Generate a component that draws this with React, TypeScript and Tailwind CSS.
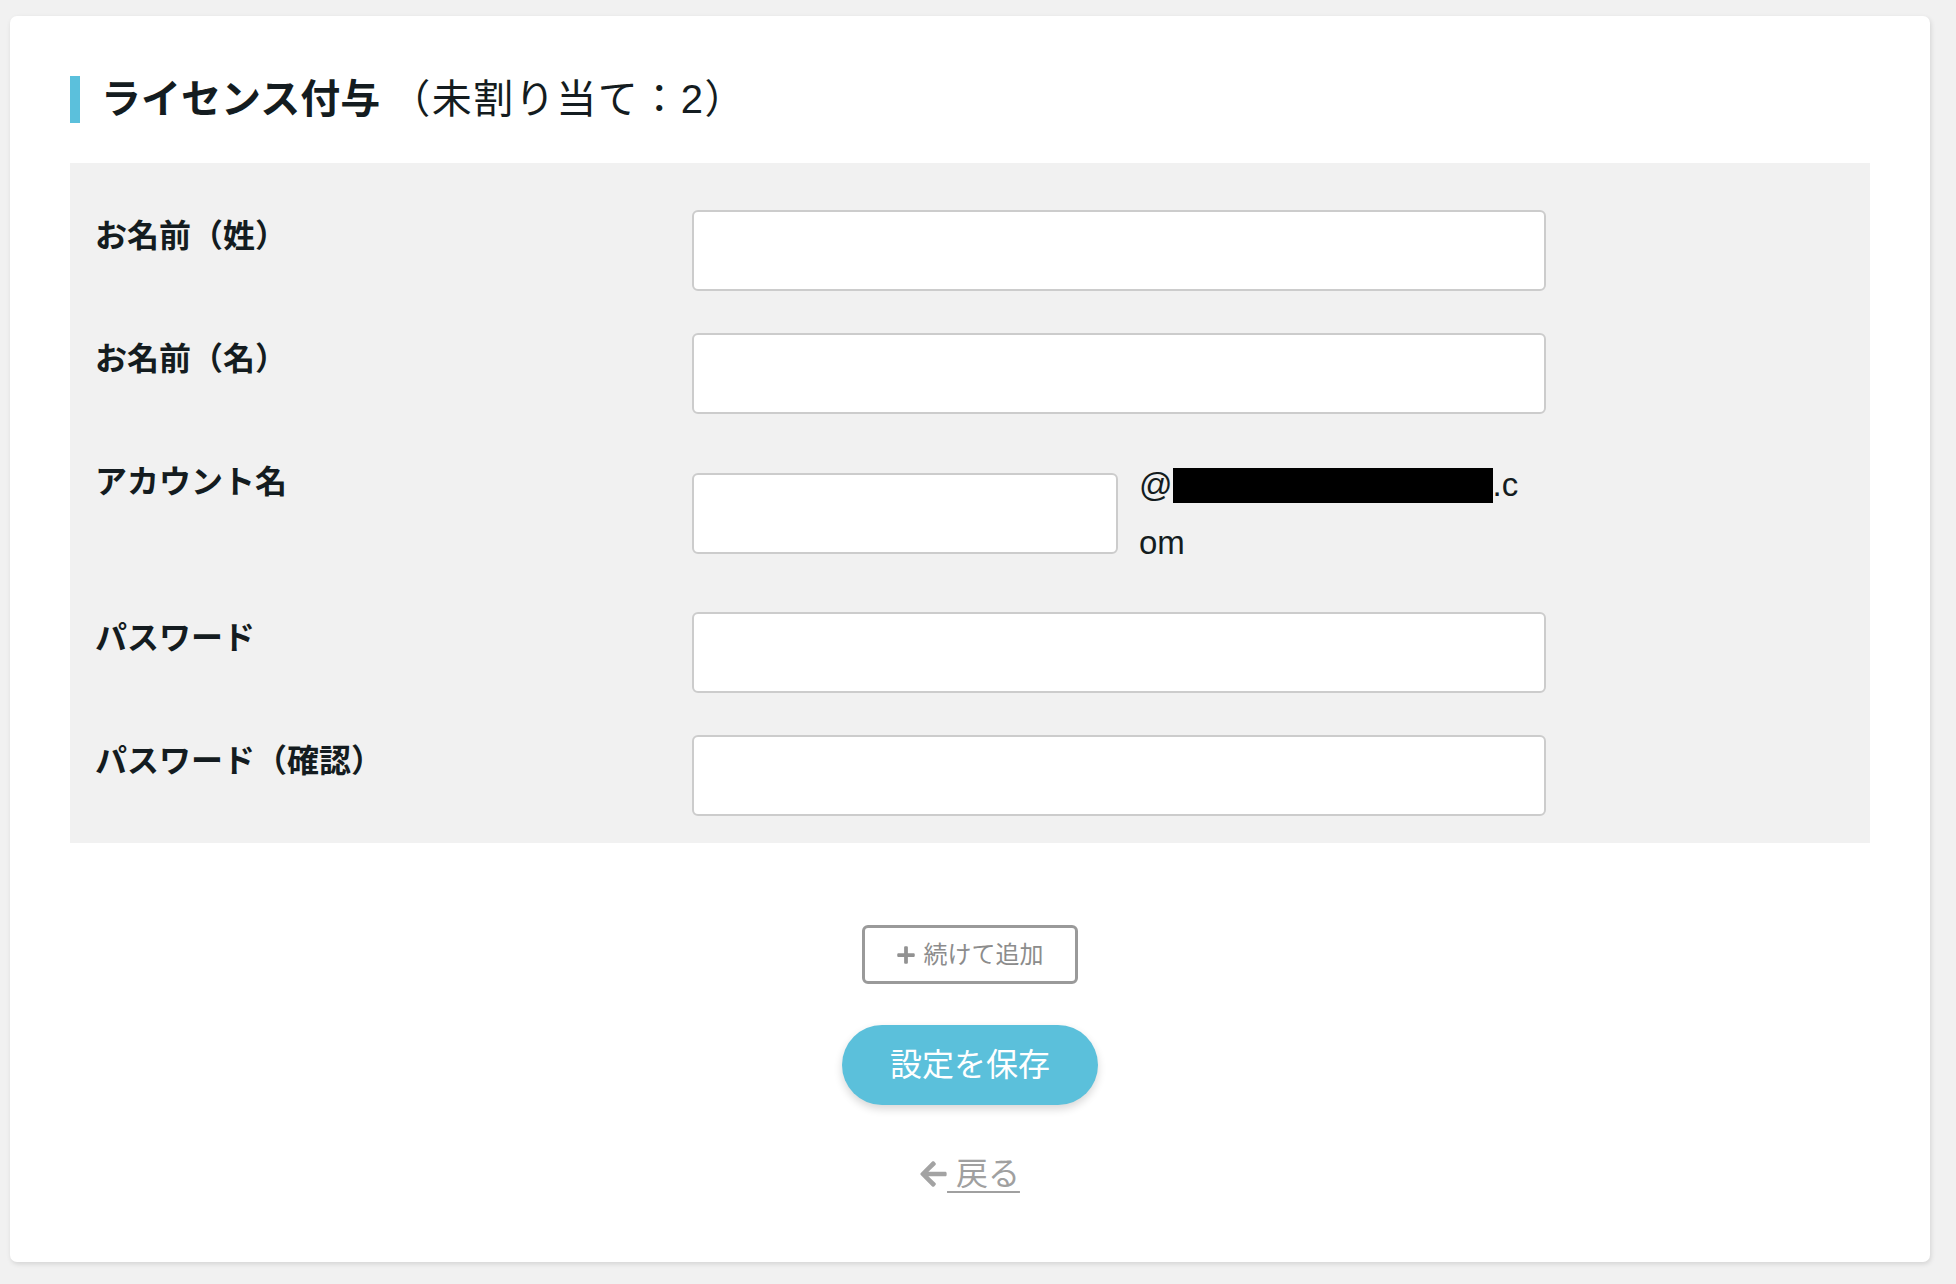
import React from "react";

const rows = [
  { label: "お名前（姓）" },
  { label: "お名前（名）" },
  { label: "アカウント名", account: true },
  { label: "パスワード", type: "password" },
  { label: "パスワード（確認）", type: "password" },
];

function PlusIcon() {
  return (
    <svg viewBox="0 0 448 512" className="w-[18px] h-[20px] fill-[#929292]">
      <path d="M416 208H272V64c0-17.67-14.33-32-32-32h-32c-17.67 0-32 14.33-32 32v144H32c-17.67 0-32 14.33-32 32v32c0 17.67 14.33 32 32 32h144v144c0 17.67 14.33 32 32 32h32c17.67 0 32-14.33 32-32V304h144c17.67 0 32-14.33 32-32v-32c0-17.67-14.33-32-32-32z" />
    </svg>
  );
}

function ArrowLeftIcon() {
  return (
    <svg viewBox="0 0 448 512" className="w-[27px] h-[30px] fill-[#a3a3a3]">
      <path d="M257.5 445.1l-22.2 22.2c-9.4 9.4-24.6 9.4-33.9 0L7 273c-9.4-9.4-9.4-24.6 0-33.9L201.4 44.7c9.4-9.4 24.6-9.4 33.9 0l22.2 22.2c9.5 9.5 9.3 25-.4 34.3L136.6 216H424c13.3 0 24 10.7 24 24v32c0 13.3-10.7 24-24 24H136.6l120.5 114.8c9.8 9.3 10 24.8.4 34.3z" />
    </svg>
  );
}

export default function App() {
  return (
    <div
      className="min-h-screen bg-[#f1f1f1] pl-[10px] pr-[26px] pt-[16px] pb-[22px]"
      style={{ fontFamily: '"Liberation Sans", "Noto Sans CJK JP", sans-serif' }}
    >
      <div className="bg-white rounded-[7px] shadow-[1px_2px_5px_rgba(0,0,0,0.12)] px-[60px] pt-[60px] pb-[68px]">
        <h1 className="flex items-center border-l-[10px] border-[#5bc0dc] pl-[21px] h-[47px] text-[40px] leading-[47px] text-[#141c20]">
          <span className="font-bold">ライセンス付与</span>
          <span className="font-normal ml-[10px] tracking-[1.5px]">（未割り当て：2）</span>
        </h1>

        <div className="mt-[40px] bg-[#f1f1f1] pl-[25px] pt-[47px] pb-[27px] flex flex-col gap-[42px]">
          {rows.map((row) => (
            <div key={row.label} className="flex">
              <label className="w-[597px] text-[32px] leading-[52px] font-bold text-[#141c20]">
                {row.label}
              </label>
              {row.account ? (
                <div className="w-[854px] flex">
                  <input
                    type="text"
                    className="mt-[17px] w-[426px] h-[81px] bg-white border-2 border-[#cccccc] rounded-[6px] px-4 text-[32px] outline-none"
                  />
                  <div className="ml-[21px] -mb-[2px] text-[33px] leading-[58px] text-[#141c20]">
                    @
                    <span className="inline-block align-middle w-[320px] h-[35px] bg-black -mt-[4px]" />
                    .c
                    <br />
                    om
                  </div>
                </div>
              ) : (
                <input
                  type={row.type ?? "text"}
                  className="w-[854px] h-[81px] bg-white border-2 border-[#cccccc] rounded-[6px] px-4 text-[32px] outline-none"
                />
              )}
            </div>
          ))}
        </div>

        <div className="flex flex-col items-center">
          <button className="mt-[82px] w-[216px] h-[59px] border-[3px] border-[#9a9a9a] rounded-[6px] bg-white flex items-center justify-center gap-[9px] text-[24px] text-[#8c8c8c]">
            <PlusIcon />
            <span>続けて追加</span>
          </button>

          <button className="mt-[41px] w-[256px] h-[80px] rounded-full bg-[#5bc0db] text-white text-[32px] shadow-[0_4px_8px_rgba(0,0,0,0.16)]">
            設定を保存
          </button>

          <a
            href="#"
            className="mt-[49px] flex items-center text-[32px] leading-[40px] text-[#a0a0a0]"
          >
            <ArrowLeftIcon />
            <span className="underline underline-offset-[6px] decoration-2">{"\u00a0戻る"}</span>
          </a>
        </div>
      </div>
    </div>
  );
}
